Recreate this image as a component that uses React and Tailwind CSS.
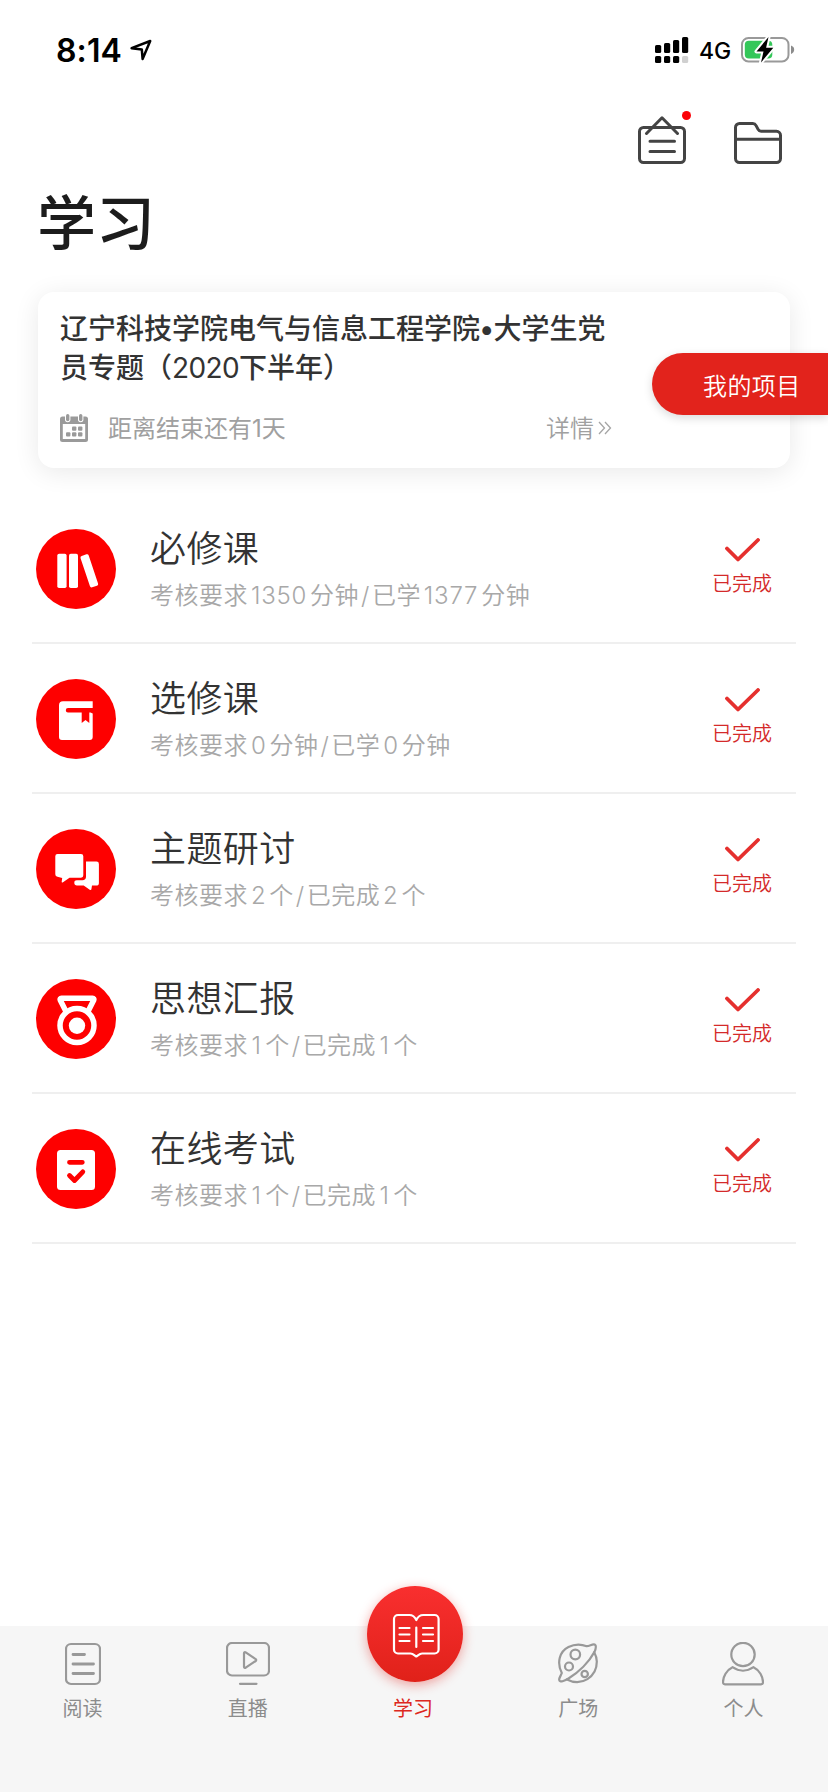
import React from "react";

const RED = "#fe0000";

function LocationIcon() {
  return (
    <svg width="22" height="22" viewBox="0 0 22 22" fill="none" stroke="#000" strokeWidth="2.5" strokeLinejoin="round">
      <path d="M1.6 9.2 20.2 2 12.6 20 11.8 10.4Z" />
    </svg>
  );
}

function SignalIcon() {
  return (
    <svg width="34" height="27" viewBox="0 0 34 27" fill="#000">
      <rect x="0" y="8" width="6.2" height="8" rx="1.6" />
      <rect x="9" y="6" width="6.2" height="10" rx="1.6" />
      <rect x="18" y="3" width="6.2" height="13" rx="1.6" />
      <rect x="27" y="0" width="6.2" height="16" rx="1.6" />
      <rect x="0" y="19" width="6.2" height="7" rx="1.6" />
      <rect x="9" y="19" width="6.2" height="7" rx="1.6" />
      <rect x="18" y="19" width="6.2" height="7" rx="1.6" />
      <rect x="27" y="19" width="6.2" height="7" rx="1.6" fill="#d0d0d0" />
    </svg>
  );
}

function BatteryIcon() {
  return (
    <svg width="54" height="28" viewBox="0 0 54 28">
      <rect x="1" y="2" width="46.5" height="23.4" rx="6.5" fill="none" stroke="#999" strokeWidth="2" />
      <path d="M50 9.5c2 .6 3.2 2.300 3.200 4.200s-1.200 3.600-3.200 4.200z" fill="#8c8c8c" />
      <rect x="3.800" y="4.800" width="27.500" height="17.800" rx="4" fill="#34c759" />
      <path d="M27.500 1 15.500 15.500h7L20 26.500 32.300 11.800h-7.200z" fill="#000" stroke="#fff" strokeWidth="4" strokeLinejoin="round" />
      <path d="M27.500 1 15.500 15.500h7L20 26.500 32.300 11.800h-7.200z" fill="#000" />
    </svg>
  );
}

function NoticeIcon() {
  return (
    <svg width="48" height="48" viewBox="0 0 48 48" fill="none" stroke="#444" strokeWidth="3" strokeLinecap="round" strokeLinejoin="round">
      <rect x="1.500" y="11.500" width="45" height="35" rx="4" />
      <path d="M8.500 17.500 24 1.800l15.500 15.700M12 25.200h24.500M12 35.500h24.500" />
    </svg>
  );
}

function FolderIcon() {
  return (
    <svg width="48" height="42" viewBox="0 0 48 42" fill="none" stroke="#444" strokeWidth="3" strokeLinejoin="round">
      <path d="M1.500 36.500v-31a4 4 0 0 1 4-4h13.300c1.500 0 2.600.8 3.300 2.100l2 3.800c.7 1.300 1.600 1.900 3 1.900h15.400a4 4 0 0 1 4 4v23.200a4 4 0 0 1-4 4h-37a4 4 0 0 1-4-4zM1.500 17.200h45" />
    </svg>
  );
}

function CalendarIcon() {
  return (
    <svg width="28" height="28" viewBox="0 0 28 28" fill="#9a9a9a">
      <rect x="0" y="2.500" width="28" height="25.500" rx="2.500" />
      <rect x="2.800" y="10" width="22.400" height="15" fill="#fff" />
      <rect x="5" y="-2" width="5.400" height="10.300" rx="2.700" fill="#fff" />
      <rect x="18" y="-2" width="5.400" height="10.300" rx="2.700" fill="#fff" />
      <rect x="6" y="0" width="3.400" height="7.200" rx="1.700" />
      <rect x="19" y="0" width="3.400" height="7.200" rx="1.700" />
      <rect x="12" y="12.500" width="4.400" height="4.200" rx="1" />
      <rect x="18" y="12.500" width="4.400" height="4.200" rx="1" />
      <rect x="6" y="18.300" width="4.400" height="4.200" rx="1" />
      <rect x="12" y="18.300" width="4.400" height="4.200" rx="1" />
      <rect x="18" y="18.300" width="4.400" height="4.200" rx="1" />
    </svg>
  );
}

function ChevronsIcon() {
  return (
    <svg width="14" height="14" viewBox="0 0 14 14" fill="none" stroke="#a5a5a5" strokeWidth="1.300">
      <path d="M1 1l5.500 6L1 13M7 1l5.500 6L7 13" />
    </svg>
  );
}

const glyphs = {
  books: (
    <g fill="#fff">
      <rect x="21.300" y="24.700" width="9.300" height="34.300" rx="1.800" />
      <rect x="33" y="24.700" width="9" height="34.300" rx="1.800" />
      <rect x="49" y="25.300" width="8.600" height="33" rx="1.800" transform="rotate(-18.500 53.300 41.800)" />
    </g>
  ),
  book: (
    <g>
      <path d="M27 22.300h29.700V29H32a2.200 2.200 0 0 0 0 4.400h22.500l2.200 1V58a3 3 0 0 1-3 3H26a3 3 0 0 1-3-3V26.300a4 4 0 0 1 4-4z" fill="#fff" />
      <path d="M45.700 33h7.600v11L49.500 41l-3.800 3z" fill={RED} />
    </g>
  ),
  chat: (
    <g fill="#fff">
      <path d="M21.500 25H45a2.300 2.300 0 0 1 2.300 2.300v19A2.300 2.300 0 0 1 45 48.700H33.500L27 53.300c-.8.500-1.500.1-1.300-.8l.5-3.500-4.700-1.200a2.500 2.500 0 0 1-2.200-2.500v-18A2.300 2.300 0 0 1 21.500 25z" />
      <path d="M50 32.500h10.500a2.400 2.400 0 0 1 2.400 2.400v19a2.700 2.700 0 0 1-2.700 2.700H56l-.6 3.700c-.2.900-.9 1-1.700.5l-6-4.200H41c-1.700 0-2.700-1-2.700-2.800s1-2.500 2.500-2.500h5.700c2.200 0 3.500-1.300 3.500-3.500z" />
    </g>
  ),
  medal: (
    <g fill="none" stroke="#fff" strokeWidth="5.500" strokeLinejoin="round">
      <path d="M30 32.500 24.200 21c-.4-1 .1-1.700 1.200-1.700h31.200c1.100 0 1.600.7 1.200 1.700L52 32.500" />
      <circle cx="41" cy="46.500" r="17" />
      <circle cx="41" cy="46.700" r="8.200" fill="#fff" stroke="none" />
    </g>
  ),
  exam: (
    <g>
      <rect x="21" y="21" width="38" height="40" rx="3.500" fill="#fff" />
      <path d="M33.500 33.300h12.800M33.500 46.500l5 5 8.300-8.700" fill="none" stroke={RED} strokeWidth="4.800" strokeLinecap="round" strokeLinejoin="round" />
    </g>
  ),
};

const courses = [
  { title: "必修课", icon: "books", parts: ["考核要求", "1350", "分钟", "/", "已学", "1377", "分钟"] },
  { title: "选修课", icon: "book", parts: ["考核要求", "0", "分钟", "/", "已学", "0", "分钟"] },
  { title: "主题研讨", icon: "chat", parts: ["考核要求", "2", "个", "/", "已完成", "2", "个"] },
  { title: "思想汇报", icon: "medal", parts: ["考核要求", "1", "个", "/", "已完成", "1", "个"] },
  { title: "在线考试", icon: "exam", parts: ["考核要求", "1", "个", "/", "已完成", "1", "个"] },
];

function partClass(part) {
  if (part === "/") return "mx-[2px]";
  if (part === "1") return "mx-[3.500px] tracking-[0.7px]";
  return /^\d/.test(part) ? "mx-[2.900px] tracking-[0.800px]" : "";
}

function CourseRow({ title, icon, parts }) {
  return (
    <li className="flex h-[150px] border-b-2 border-[#efefef] pl-1">
      <svg className="mt-[35px] shrink-0" width="80" height="80" viewBox="0 0 80 80">
        <circle cx="40" cy="40" r="40" fill={RED} />
        {glyphs[icon]}
      </svg>
      <div className="ml-[34px] flex-1 pt-[30px]">
        <h2 className="text-[36px] leading-[50px] font-[350] tracking-[0.4px] text-[#333]">{title}</h2>
        <p className="mt-[5px] text-[24px] leading-[34px] font-[350] tracking-[0.5px] whitespace-nowrap text-[#a8a8a8]">
          {parts.map((part, i) => (
            <span key={i} className={partClass(part)}>{part}</span>
          ))}
        </p>
      </div>
      <div className="mr-[24px] flex w-[60px] flex-col items-center pt-[44px] text-[#d42a2a]">
        <svg width="35" height="24" viewBox="0 0 35 24" fill="none" stroke="#e5302e" strokeWidth="3.800" strokeLinecap="round" strokeLinejoin="round">
          <path d="M2 10.500 13 21.500 33 2" />
        </svg>
        <span className="mt-[8px] text-[20px] leading-[28px] font-[350] whitespace-nowrap">已完成</span>
      </div>
    </li>
  );
}

const tabs = [
  {
    label: "阅读",
    icon: (
      <svg width="36" height="44" viewBox="0 0 36 44">
        <rect x="1" y="2" width="34" height="40" rx="5" />
        <path d="M8 12.500h11.500M8 22h20.500M8 31.500h20.500" strokeWidth="2.800" />
      </svg>
    ),
  },
  {
    label: "直播",
    icon: (
      <svg width="44" height="44" viewBox="0 0 44 44">
        <rect x="1" y="1" width="42" height="32.500" rx="5" />
        <path d="M18 11.300v13.400c0 1 .9 1.500 1.700 1l10-6.700c.7-.5.700-1.300 0-1.800l-10-6.800c-.8-.5-1.700-.1-1.700.9zM14 41.800h16.500" />
      </svg>
    ),
  },
  { label: "学习", active: true },
  {
    label: "广场",
    icon: (
      <svg width="40" height="44" viewBox="0 0 40 44">
        <path d="M3.800 31C-1.500 20.500 1.500 9.500 10.500 5c6-3 12-3.200 18.200-.8 2.800-.3 5-1.800 7-1.800 3.200 0 2.200 4.500.8 7.500C31 20 20.500 30.500 10.500 36.500c-4 2.300-8.800 4.500-9.300 1.300-.3-1.800 1.800-4.300 2.600-6.800z" />
        <path d="M9 37.500c14.500 7.500 30-2.500 29.800-18 0-3-.8-6-2.600-9.300" />
        <circle cx="17.300" cy="12.500" r="4.800" />
        <circle cx="11" cy="24.500" r="4" />
        <circle cx="26.700" cy="32" r="3.200" />
      </svg>
    ),
  },
  {
    label: "个人",
    icon: (
      <svg width="42" height="44" viewBox="0 0 42 44">
        <circle cx="21" cy="12.500" r="11.700" />
        <path d="M10.500 25.200C4.500 28 1 35 1 40.300c0 1.300.7 2 2 2h36c1.300 0 2-.7 2-2 0-5.300-3.500-12.300-9.500-15.100-6.500 4.500-14.500 4.500-21 0z" />
      </svg>
    ),
  },
];

function StudyButton() {
  return (
    <span className="-mt-[40px] ml-[4px] flex size-24 items-center justify-center rounded-full bg-linear-to-b from-[#f92f2f] to-[#e02119] shadow-[0_3px_12px_rgba(225,35,28,0.4)]">
      <svg width="96" height="96" viewBox="0 0 96 96" fill="none" stroke="#fff" strokeWidth="2.200" strokeLinecap="round" strokeLinejoin="round">
        <path d="M49.300 34c-1.500-3.300-4-5-7-5H31a4 4 0 0 0-4 4v30.500a4 4 0 0 0 4 4h12.500c2.500 0 3.500 1.500 5.800 3 2.300-1.500 3.300-3 5.800-3h12.500a4 4 0 0 0 4-4V33a4 4 0 0 0-4-4H56.300c-3 0-5.500 1.700-7 5z" />
        <path d="M49.300 41.500v19.500M32.500 42h10M32.500 48.500h10M32.500 55h10M56 42h10M56 48.500h10M56 55h10" />
      </svg>
    </span>
  );
}

export default function App() {
  return (
    <div className="flex h-[1792px] w-[828px] flex-col overflow-hidden bg-white font-['Inter','Noto_Sans_CJK_SC',sans-serif]" lang="zh-CN">
      <div className="flex h-[100px] items-center pl-[56px] pr-[33px]">
        <span className="pt-px text-[32px] leading-[40px] font-semibold tracking-[0.1px] text-black">8:14</span>
        <span className="ml-[8px]"><LocationIcon /></span>
        <div className="ml-auto flex items-center">
          <SignalIcon />
          <span className="ml-[10px] w-[33px] pt-px text-[23px] leading-[28px] font-medium text-black">4G</span>
          <span className="ml-[9px]"><BatteryIcon /></span>
        </div>
      </div>

      <header className="px-[38px]">
        <div className="flex h-[64px] items-end justify-end gap-[48px] pr-[8px]">
          <button className="relative">
            <NoticeIcon />
            <span className="absolute -top-[5px] -right-[5px] size-[9px] rounded-full bg-[#fb0207]" />
          </button>
          <button><FolderIcon /></button>
        </div>
        <h1 className="-ml-px mt-[20px] text-[59px] leading-[80px] font-medium text-[#1c1c1c]">学习</h1>
      </header>

      <section className="relative mt-[28px] h-[176px] px-[38px]">
        <div className="h-full rounded-[16px] bg-white pt-[18px] pl-[22px] shadow-[0_4px_26px_rgba(0,0,0,0.09)]">
          <h3 className="w-[560px] text-[28px] leading-[39px] font-medium text-[#333]">
            辽宁科技学院电气与信息工程学院<span className="mx-[-0.700px]">•</span>大学生党
            <br />
            员专题（<span className="font-normal tracking-[-0.6px]">2020</span>下半年）
          </h3>
          <div className="mt-[22px] flex w-[552px] items-center text-[24px] leading-[34px] text-[#a0a0a0]">
            <CalendarIcon />
            <span className="ml-[20px] pt-px">距离结束还有1天</span>
            <span className="ml-auto mr-[4px] pt-[2px] font-[350]">详情</span>
            <ChevronsIcon />
          </div>
        </div>
        <button className="absolute top-[61px] right-0 h-[62px] w-[176px] rounded-l-full bg-[#e2231c] pt-[5px] pl-[51px] text-left text-[24px] font-[350] tracking-[0.4px] text-white shadow-[0_3px_10px_rgba(0,0,0,0.15)]">
          我的项目
        </button>
      </section>

      <ul className="mt-[26px] px-[32px]">
        {courses.map((c) => <CourseRow key={c.title} {...c} />)}
      </ul>

      <nav className="mt-auto grid h-[166px] grid-cols-5 bg-[#f6f6f6] pr-[2px]">
        {tabs.map((t) => (
          <div key={t.label} className="flex flex-col items-center">
            {t.active ? (
              <StudyButton />
            ) : (
              <span className="mt-[16px] h-[40px] fill-none stroke-[#999] stroke-[2.200px] [stroke-linecap:round] [stroke-linejoin:round]">{t.icon}</span>
            )}
            <span className={t.active ? "mt-[13px] text-[20px] leading-[28px] text-[#dd2720]" : "mt-[13px] text-[20px] leading-[28px] text-[#8c8c8c]"}>
              {t.label}
            </span>
          </div>
        ))}
      </nav>
    </div>
  );
}
